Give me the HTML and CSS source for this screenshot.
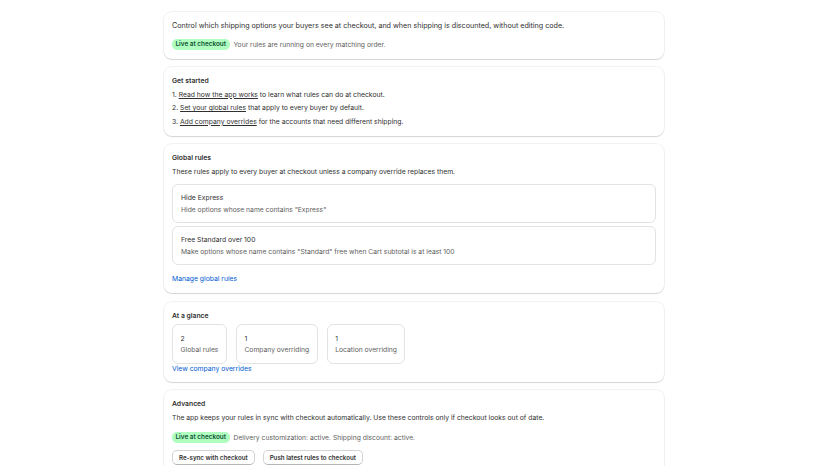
FILE: index.html
```html
<!DOCTYPE html>
<html lang="en">
<head>
    <meta charset="UTF-8">
    <meta name="viewport" content="width=device-width, initial-scale=1.0">
    <title>Shipping rules</title>
    <link rel="stylesheet" href="styles.css">
</head>
<body>
    <div class="page">
        <section class="card">
            <p class="text intro">Control which shipping options your buyers see at checkout, and when shipping is discounted, without editing code.</p>
            <div class="status">
                <span class="badge">Live at checkout</span>
                <span class="subdued">Your rules are running on every matching order.</span>
            </div>
        </section>

        <section class="card">
            <h2 class="card-title">Get started</h2>
            <ol class="steps">
                <li>1. <a href="#" class="plain-link">Read how the app works</a> to learn what rules can do at checkout.</li>
                <li>2. <a href="#" class="plain-link">Set your global rules</a> that apply to every buyer by default.</li>
                <li>3. <a href="#" class="plain-link">Add company overrides</a> for the accounts that need different shipping.</li>
            </ol>
        </section>

        <section class="card">
            <h2 class="card-title">Global rules</h2>
            <p class="text">These rules apply to every buyer at checkout unless a company override replaces them.</p>
            <div class="rules">
                <div class="rule">
                    <div class="rule-name">Hide Express</div>
                    <div class="subdued">Hide options whose name contains "Express"</div>
                </div>
                <div class="rule">
                    <div class="rule-name">Free Standard over 100</div>
                    <div class="subdued">Make options whose name contains "Standard" free when Cart subtotal is at least 100</div>
                </div>
            </div>
            <a href="#" class="link manage-link">Manage global rules</a>
        </section>

        <section class="card">
            <h2 class="card-title">At a glance</h2>
            <div class="stats">
                <div class="stat">
                    <div class="stat-value">2</div>
                    <div class="subdued">Global rules</div>
                </div>
                <div class="stat">
                    <div class="stat-value">1</div>
                    <div class="subdued">Company overriding</div>
                </div>
                <div class="stat">
                    <div class="stat-value">1</div>
                    <div class="subdued">Location overriding</div>
                </div>
            </div>
            <a href="#" class="link overrides-link">View company overrides</a>
        </section>

        <section class="card">
            <h2 class="card-title">Advanced</h2>
            <p class="text">The app keeps your rules in sync with checkout automatically. Use these controls only if checkout looks out of date.</p>
            <div class="status status-spaced">
                <span class="badge">Live at checkout</span>
                <span class="subdued">Delivery customization: active. Shipping discount: active.</span>
            </div>
            <div class="actions">
                <button class="btn">Re-sync with checkout</button>
                <button class="btn">Push latest rules to checkout</button>
            </div>
        </section>
    </div>
</body>
</html>
```

FILE: styles.css
```css
body {
    margin: 0;
    background-color: #ffffff;
    font-family: Inter, "Noto Sans", sans-serif;
    font-size: 6.8px;
    line-height: 12px;
    color: #303030;
}
.page {
    width: 500px;
    margin: 12px auto 0;
    display: flex;
    flex-direction: column;
    gap: 8.5px;
}
.card {
    background-color: #ffffff;
    border-radius: 8px;
    padding: 8px;
    box-shadow: 0 0 0 1px rgba(0, 0, 0, 0.05), 0 1px 1px rgba(0, 0, 0, 0.12);
    display: flex;
    flex-direction: column;
}
.text {
    margin: 0;
}
.intro {
    font-size: 7.15px;
}
.card-title {
    margin: 0 0 1.5px;
    font-size: 6.8px;
    line-height: 12px;
    font-weight: 600;
}
.subdued {
    color: #616161;
    font-size: 6.75px;
}
.status {
    display: flex;
    align-items: center;
    gap: 4px;
    margin-top: 6.5px;
}
.status-spaced {
    margin-top: 8px;
}
.badge {
    background-color: #affebf;
    color: #0c5132;
    font-weight: 600;
    font-size: 6.4px;
    line-height: 11px;
    padding: 0 3.5px;
    border-radius: 5px;
}
.steps {
    list-style: none;
    margin: 0;
    padding: 0;
    display: flex;
    flex-direction: column;
    gap: 1.5px;
}
.plain-link {
    color: #303030;
    text-decoration: underline;
}
.link {
    color: #005bd3;
    text-decoration: none;
    align-self: flex-start;
}
.rules {
    display: flex;
    flex-direction: column;
    gap: 3px;
    margin-top: 6.5px;
}
.rule {
    border: 1px solid #e3e3e3;
    border-radius: 6px;
    padding: 7px 8px 6px;
}
.manage-link {
    margin-top: 8px;
}
.stats {
    display: flex;
    gap: 9px;
    margin-top: 0.5px;
}
.stat {
    border: 1px solid #e3e3e3;
    border-radius: 6px;
    padding: 8px 7.5px 7px;
    line-height: 11.5px;
}
.overrides-link {
    line-height: 10px;
}
.actions {
    display: flex;
    gap: 8px;
    margin-top: 6.5px;
}
.btn {
    font-family: inherit;
    font-size: 6.2px;
    font-weight: 600;
    line-height: 13px;
    color: #303030;
    background-color: #ffffff;
    border: 1px solid #d4d4d4;
    border-bottom-color: #b5b5b5;
    border-radius: 5px;
    padding: 0 6px;
    cursor: pointer;
}
```
